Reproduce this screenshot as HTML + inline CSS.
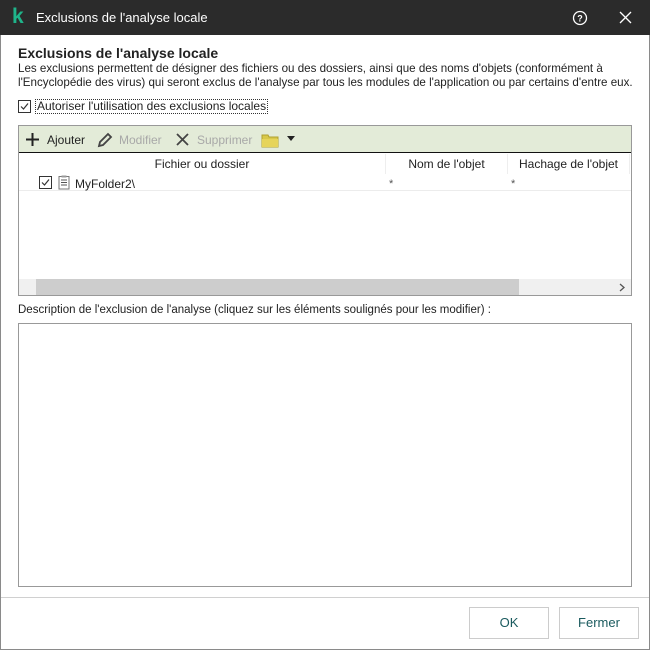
<!DOCTYPE html>
<html><head><meta charset="utf-8"><style>
*{box-sizing:border-box;margin:0;padding:0}
body{width:650px;height:650px;overflow:hidden;background:#fff;font-family:"Liberation Sans",sans-serif;font-size:12px;color:#222;position:relative}
.abs{position:absolute}
.win{position:absolute;left:0;top:0;width:650px;height:650px;border:1px solid #8a8a8a}
.title{left:0;top:0;width:650px;height:35px;background:#2b2b2b;color:#fff;font-size:13px}
</style></head><body>
<div class="win"></div>
<div class="abs title">
 <div class="abs" style="left:12px;top:7px;color:#1fb48a;font-weight:bold;font-size:21px;line-height:20px">k</div>
 <div class="abs" style="left:36px;top:10px">Exclusions de l'analyse locale</div>
 <svg class="abs" style="left:572px;top:10px" width="16" height="16"><circle cx="8" cy="8" r="6.5" fill="none" stroke="#fff" stroke-width="1.3"/><text x="8" y="11.5" fill="#fff" font-size="9" font-weight="bold" text-anchor="middle" font-family="Liberation Sans">?</text></svg>
 <svg class="abs" style="left:619px;top:11px" width="13" height="13"><path d="M1 1L12 12M12 1L1 12" stroke="#fff" stroke-width="1.3"/></svg>
</div>
<div class="abs" style="left:18px;top:45px;font-weight:bold;font-size:14px;color:#222">Exclusions de l'analyse locale</div>
<div class="abs" style="left:18px;top:62px;width:620px;font-size:11.6px;line-height:14px;color:#222">Les exclusions permettent de désigner des fichiers ou des dossiers, ainsi que des noms d'objets (conformément à l'Encyclopédie des virus) qui seront exclus de l'analyse par tous les modules de l'application ou par certains d'entre eux.</div>
<svg class="abs" style="left:18px;top:100px" width="13" height="13"><rect x=".5" y=".5" width="12" height="12" fill="#fff" stroke="#333"/><path d="M3 6.5L5.5 9L10 3.5" stroke="#333" fill="none" stroke-width="1.2"/></svg>
<div class="abs" style="left:35px;top:99px;border:1px dotted #333;padding:0 1px;font-size:12px;line-height:13px">Autoriser l'utilisation des exclusions locales</div>
<div class="abs" style="left:18px;top:125px;width:614px;height:171px;border:1px solid #999;background:#fff"></div>
<div class="abs" style="left:19px;top:126px;width:612px;height:27px;background:#e3ebd8;border-bottom:1px solid #111"></div>
<svg class="abs" style="left:25px;top:132px" width="15" height="15"><path d="M7.5 1V14M1 7.5H14" stroke="#222" stroke-width="2"/></svg>
<div class="abs" style="left:47px;top:133px">Ajouter</div>
<svg class="abs" style="left:96px;top:131px" width="18" height="18"><path d="M3 15L4 11L12 3L15 6L7 14Z" fill="none" stroke="#444" stroke-width="1.8"/></svg>
<div class="abs" style="left:119px;top:133px;color:#a8a8a8">Modifier</div>
<svg class="abs" style="left:176px;top:133px" width="13" height="13"><path d="M1 1L12 12M12 1L1 12" stroke="#444" stroke-width="1.8"/></svg>
<div class="abs" style="left:197px;top:133px;color:#a8a8a8">Supprimer</div>
<svg class="abs" style="left:261px;top:131px" width="18" height="17"><path d="M1 4H7L8 6H17V16H1Z" fill="#d8c84a" stroke="#b0a030"/><path d="M1 8H17V16H1Z" fill="#e6d45a"/></svg>
<svg class="abs" style="left:287px;top:136px" width="8" height="5"><path d="M0 0H8L4 5Z" fill="#222"/></svg>
<div class="abs" style="left:19px;top:154px;width:367px;height:20px;border-right:1px solid #eee;text-align:center;line-height:20px">Fichier ou dossier</div>
<div class="abs" style="left:386px;top:154px;width:122px;height:20px;border-right:1px solid #eee;text-align:center;line-height:20px">Nom de l'objet</div>
<div class="abs" style="left:508px;top:154px;width:122px;height:20px;border-right:1px solid #eee;text-align:center;line-height:20px">Hachage de l'objet</div>
<div class="abs" style="left:19px;top:190px;width:612px;height:1px;background:#ececec"></div>
<svg class="abs" style="left:39px;top:176px" width="13" height="13"><rect x=".5" y=".5" width="12" height="12" fill="#fff" stroke="#333"/><path d="M3 6.5L5.5 9L10 3.5" stroke="#333" fill="none" stroke-width="1.2"/></svg>
<svg class="abs" style="left:58px;top:175px" width="12" height="15"><rect x="1" y="1.5" width="10" height="12.5" fill="#fff" stroke="#777"/><rect x="3.5" y=".5" width="5" height="2" fill="#999"/><path d="M3 5H9M3 7.5H9M3 10H9" stroke="#555"/></svg>
<div class="abs" style="left:75px;top:177px">MyFolder2\</div>
<div class="abs" style="left:389px;top:178px;font-size:11px;color:#555">*</div>
<div class="abs" style="left:511px;top:178px;font-size:11px;color:#555">*</div>
<div class="abs" style="left:19px;top:279px;width:612px;height:16px;background:#f0f0f0"></div>
<div class="abs" style="left:36px;top:279px;width:483px;height:16px;background:#cdcdcd"></div>
<svg class="abs" style="left:619px;top:283px" width="6" height="9"><path d="M1 1L5 4.5L1 8" stroke="#555" fill="none" stroke-width="1.3"/></svg>
<div class="abs" style="left:18px;top:304px;font-size:11.5px">Description de l'exclusion de l'analyse (cliquez sur les éléments soulignés pour les modifier) :</div>
<div class="abs" style="left:18px;top:323px;width:614px;height:264px;border:1px solid #999"></div>
<div class="abs" style="left:1px;top:597px;width:648px;height:1px;background:#d0d0d0"></div>
<div class="abs" style="left:469px;top:607px;width:80px;height:32px;border:1px solid #ccc;text-align:center;line-height:30px;color:#1a5a5e;font-size:13px">OK</div>
<div class="abs" style="left:559px;top:607px;width:80px;height:32px;border:1px solid #ccc;text-align:center;line-height:30px;color:#1a5a5e;font-size:13px">Fermer</div>
</body></html>
